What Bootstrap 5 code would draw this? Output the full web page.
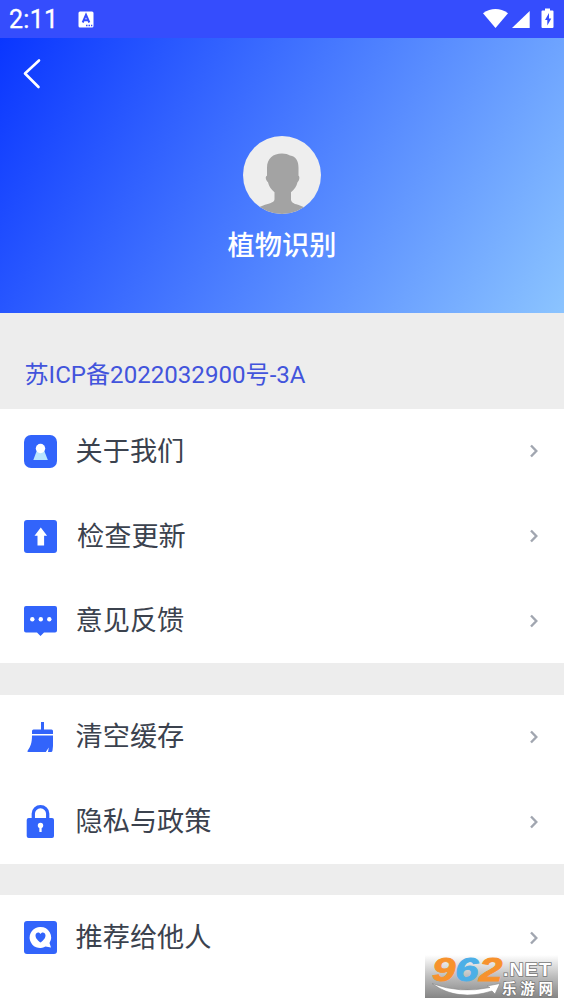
<!DOCTYPE html>
<html lang="zh-CN">
<head>
<meta charset="utf-8">
<meta name="viewport" content="width=device-width, initial-scale=1">
<title>植物识别</title>
<link href="https://cdn.jsdelivr.net/npm/bootstrap@5.3.0/dist/css/bootstrap.min.css" rel="stylesheet">
<style>
body{font-family:Roboto,"Noto Sans CJK SC",sans-serif;color:#3b424e;background:#fff}
.screen{width:564px;height:1004px}
.status{height:38px;background:#354dfd;padding:0 10px 0 9px}
.clock{font-size:25px;line-height:38px;letter-spacing:.3px;width:49px;padding-top:1px;-webkit-text-stroke:.3px #fff}
.input-badge{margin-left:20px}
.hero{height:275px;background:linear-gradient(121deg,#0a36ff 0%,#8bc4ff 100%);padding-top:97px}
.back{left:22px;top:20px}
.hero-name{font-size:27.2px;font-weight:500;line-height:40px;margin-top:11px}
.icp{height:96px;background:#ededed;color:#4254dc;font-size:24.1px;line-height:34px;padding:44.500px 25px 0 24.500px}
.entry{height:84.7px;padding:0 24.500px 0 24px}
.entry-text{font-size:27.2px;line-height:40px;margin-left:18.500px;padding-top:1px}
.entry-text.nudged{margin-left:20px}
.gap-band{height:31.5px;background:#ededed}
.blue{fill:#3264fb}
.chev{fill:none;stroke:#a1a6b0;stroke-width:2.4}
.wm{left:425px;top:955px;width:133px;height:43px}
</style>
</head>
<body>
<main class="screen position-relative overflow-hidden">
  <div class="status d-flex align-items-center text-white">
    <span class="clock">2:11</span>
    <svg class="input-badge" width="16" height="17" viewBox="0 0 16 17"><rect x=".5" y=".5" width="15" height="16" rx="1.5" fill="#fff"/><path d="M4.700 11.500 8 3.800l3.300 7.700M5.800 9.200h4.400" fill="none" stroke="#354dfd" stroke-width="2"/><path d="M8 14.500h1.500m1 0H12m1 0h1.300" stroke="#354dfd" stroke-width="1.300"/></svg>
    <svg class="ms-auto" width="71" height="22" viewBox="483 8 71 22" fill="#fff"><path d="M483 13.200Q495.500 4.800 508 13.200L495.500 28Z"/><path d="M529.700 11V28H512Z"/><path fill-rule="evenodd" d="M545 8.500h5v2h2.500q1 0 1 1V27q0 1-1 1h-10q-1 0-1-1V11.500q0-1 1-1h2.500ZM549 13l-4 7h2.300v5.500l4-7H549Z"/></svg>
  </div>
  <header class="hero position-relative d-flex flex-column align-items-center text-white">
    <svg class="back position-absolute" width="20" height="32" viewBox="0 0 20 32"><path d="M17 2.500 3 15.500 16.500 29" fill="none" stroke="#fff" stroke-width="2.600" stroke-linecap="round" stroke-linejoin="round"/></svg>
    <svg width="80" height="80" viewBox="0 0 80 80"><defs><clipPath id="round"><circle cx="40" cy="40" r="39"/></clipPath></defs><circle cx="40" cy="40" r="39" fill="#eee"/><path clip-path="url(#round)" fill="#a3a3a3" d="M40 18.500c3.500 0 6 .8 8 2 6 .8 8.500 5.500 8.500 12.300v8c1.500.5 1 5-1 6.500-1 4.500-3 7-6.500 10v7c0 3 2.500 4.500 7 5.500l10 4v9H13v-9l10-4c5-1.500 9.500-2.500 9.500-5.500v-7c-3.500-3-5.500-5.500-6.500-10-2.500-2-3-6-1-6.500v-8C25 23.500 31 18.500 40 18.500Z"/></svg>
    <div class="hero-name">植物识别</div>
  </header>
  <div class="icp">苏ICP备2022032900号-3A</div>
  <section>
    <div class="entry d-flex align-items-center"><svg width="33" height="33" viewBox="0 0 33 33"><rect class="blue" width="33" height="33" rx="7"/><path d="M12.700 16h7.600l3.500 9H9.300Z" fill="#b9e5ff"/><circle cx="16.500" cy="13.500" r="4.700" fill="#fff"/></svg><span class="entry-text">关于我们</span><svg class="ms-auto" width="12" height="16" viewBox="0 0 12 16"><path class="chev" d="m3 2.500 5.300 5.500L3 13.500"/></svg></div>
    <div class="entry d-flex align-items-center"><svg width="33" height="33" viewBox="0 0 33 33"><rect class="blue" width="33" height="33" rx="3"/><path d="m16.800 7.500 6.300 8.200h-3V25.500h-6.600V15.700h-3Z" fill="#fff"/></svg><span class="entry-text nudged">检查更新</span><svg class="ms-auto" width="12" height="16" viewBox="0 0 12 16"><path class="chev" d="m3 2.500 5.300 5.500L3 13.500"/></svg></div>
    <div class="entry d-flex align-items-center"><svg width="33" height="33" viewBox="0 0 33 33"><path class="blue" d="M2 2h29q2 0 2 2v22.500q0 2-2 2H20l-3.500 3.500L13 28.500H2q-2 0-2-2V4q0-2 2-2Z"/><g fill="#fff"><circle cx="8.300" cy="15.300" r="2.200"/><circle cx="16.800" cy="15.300" r="2.200"/><circle cx="25.300" cy="15.300" r="2.200"/></g></svg><span class="entry-text">意见反馈</span><svg class="ms-auto" width="12" height="16" viewBox="0 0 12 16"><path class="chev" d="m3 2.500 5.300 5.500L3 13.500"/></svg></div>
  </section>
  <div class="gap-band"></div>
  <section>
    <div class="entry d-flex align-items-center"><svg width="33" height="33" viewBox="0 0 33 33"><path class="blue" d="M17 2h3v7.500h7.500q1.500 0 1.500 1.500v3H8v-3q0-1.500 1.500-1.500H17ZM8 15.500h21V26l-.5 4.500q-.2 1.500-1.500 1.500h-3l.8-4.500-3 4.500H4.500q-1.800 0-.8-1.500C6.700 26.500 8 22.500 8 15.500Z"/></svg><span class="entry-text">清空缓存</span><svg class="ms-auto" width="12" height="16" viewBox="0 0 12 16"><path class="chev" d="m3 2.500 5.300 5.500L3 13.500"/></svg></div>
    <div class="entry d-flex align-items-center"><svg width="33" height="33" viewBox="0 0 33 33"><path d="M9.300 14V8.500a7.200 6.800 0 0 1 14.400 0V14" fill="none" stroke="#3264fb" stroke-width="3.300"/><rect class="blue" x="2.700" y="13" width="27.300" height="20" rx="2"/><circle cx="16.500" cy="20.500" r="2.700" fill="#fff"/><path d="M16.500 21v6" stroke="#fff" stroke-width="2.300"/></svg><span class="entry-text">隐私与政策</span><svg class="ms-auto" width="12" height="16" viewBox="0 0 12 16"><path class="chev" d="m3 2.500 5.300 5.500L3 13.500"/></svg></div>
  </section>
  <div class="gap-band"></div>
  <section>
    <div class="entry d-flex align-items-center"><svg width="33" height="33" viewBox="0 0 33 33"><rect class="blue" width="33" height="33" rx="3"/><path fill="#fff" d="M16.500 6a10.500 10.500 0 0 1 9 16l1.500 4.500-5.500-1A10.500 10.500 0 1 1 16.500 6Z"/><path class="blue" d="M16.500 21.500c-2-1.500-5-4-5-7 0-3.500 4-4 5-1.500 1-2.500 5-2 5 1.500 0 3-3 5.500-5 7Z"/></svg><span class="entry-text">推荐给他人</span><svg class="ms-auto" width="12" height="16" viewBox="0 0 12 16"><path class="chev" d="m3 2.500 5.300 5.500L3 13.500"/></svg></div>
  </section>
  <svg class="wm position-absolute overflow-visible" viewBox="0 0 133 43">
    <defs><linearGradient id="shade" x2="0" y2="1"><stop stop-color="#fff"/><stop offset=".5" stop-color="#bdbdbd"/><stop offset="1" stop-color="#858585"/></linearGradient></defs>
    <rect width="133" height="43" fill="url(#shade)"/>
    <path d="M7 28.500Q35 39 65 32.500l-3-1.500 13-2.500-5 10.500-3-3Q32 47 7 28.500Z" fill="#fff" stroke="#888" stroke-width=".6"/>
    <g font-family="Liberation Sans, sans-serif" font-weight="700" font-style="italic" font-size="33"><text transform="translate(7 26) scale(1.280 1)" fill="#f7922d" stroke="#f7922d" stroke-width=".8">9</text><text transform="translate(30 26) scale(1.280 1)" fill="#4cafe7" stroke="#4cafe7" stroke-width=".8">6</text><text transform="translate(54 26) scale(1.280 1)" fill="#f7922d" stroke="#f7922d" stroke-width=".8">2</text></g>
    <g fill="#fff" stroke="#777" stroke-width="1.400" paint-order="stroke" font-weight="700"><text transform="translate(78 20.500) scale(1.120 1)" font-family="Liberation Sans, sans-serif" font-size="17.500" letter-spacing="1">.NET</text><text x="77" y="39" font-family="Noto Sans CJK SC, sans-serif" font-size="14.500" textLength="51">乐游网</text></g>
  </svg>
</main>
<script src="https://cdn.jsdelivr.net/npm/bootstrap@5.3.0/dist/js/bootstrap.bundle.min.js"></script>
</body>
</html>
